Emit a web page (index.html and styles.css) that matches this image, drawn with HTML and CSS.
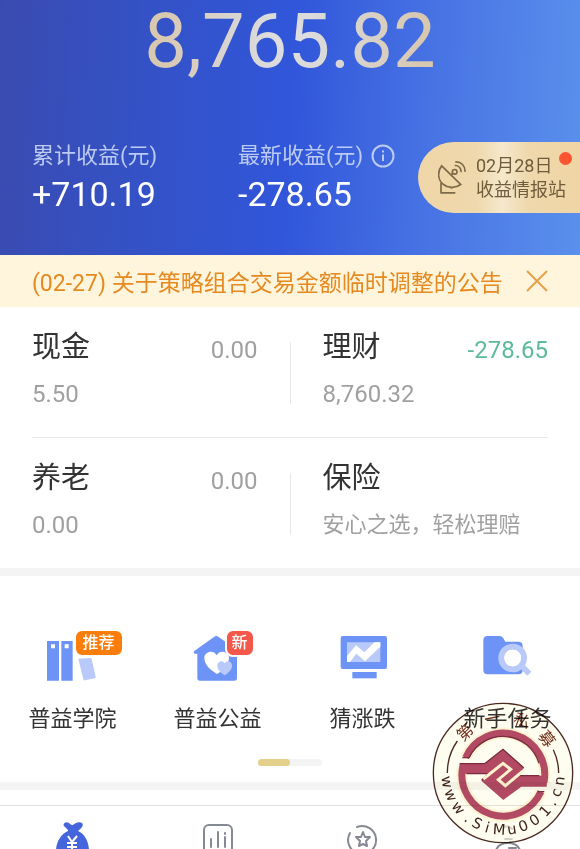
FILE: index.html
```
<!DOCTYPE html>
<html lang="zh-CN">
<head>
  <meta charset="UTF-8" />
  <meta name="viewport" content="width=device-width, initial-scale=1.0"/>
  <title>我的资产</title>
  <link rel="stylesheet" href="styles.css">
</head>
<body>

  <header>
    <h1 class="total">8,765.82</h1>
    <div class="stats">
      <div class="stat">
        <div class="stat-label">累计收益(元)</div>
        <div class="stat-value">+710.19</div>
      </div>
      <div class="stat">
        <div class="stat-label">
          最新收益(元)
          <button class="info" aria-label="说明">
            <svg viewBox="0 0 24 24" width="24" height="24">
              <circle cx="12" cy="12" r="10.5"/>
              <path d="M12 10.5v6.5M12 6.5v2"/>
            </svg>
          </button>
        </div>
        <div class="stat-value">-278.65</div>
      </div>
      <a class="report" href="#">
        <svg viewBox="115 92 84 104" width="28" height="35">
          <path d="M126 109C112 128 115 151 129 163C144 176 168 177 183 165ZM124 160V189M122 190H167M147 171L158 176"/>
          <circle cx="165" cy="127" r="7"/>
          <path d="M154 136L160 131M165 108C177 107 185 116 184 128M167 97C185 96 197 109 196 127"/>
        </svg>
        <span>02月28日<br>收益情报站</span>
        <i class="dot"></i>
      </a>
    </div>
  </header>

  <div class="notice">
    <a href="#">(02-27) 关于策略组合交易金额临时调整的公告</a>
    <button aria-label="关闭">
      <svg viewBox="0 0 22 22" width="22" height="22"><path d="M1 1L21 21M21 1L1 21"/></svg>
    </button>
  </div>

  <section class="assets">
    <div class="asset-row">
      <div class="asset">
        <div class="asset-head"><h2>现金</h2><span>0.00</span></div>
        <p>5.50</p>
      </div>
      <div class="divider"></div>
      <div class="asset">
        <div class="asset-head"><h2>理财</h2><span class="down">-278.65</span></div>
        <p>8,760.32</p>
      </div>
    </div>
    <div class="asset-row">
      <div class="asset">
        <div class="asset-head"><h2>养老</h2><span>0.00</span></div>
        <p>0.00</p>
      </div>
      <div class="divider"></div>
      <div class="asset">
        <div class="asset-head"><h2>保险</h2></div>
        <p class="slogan">安心之选，轻松理赔</p>
      </div>
    </div>
  </section>

  <section class="shortcuts">
    <div class="shortcut-list">
      <a href="#">
        <span class="icon">
          <svg viewBox="77 48 162 144" width="54" height="48">
            <path fill="#6c93f5" d="M80 63H116V182H80ZM123 63H157V182H123Z"/>
            <path fill="#fff" d="M92 73H104V85H92ZM133 73H145V85H133Z"/>
            <path fill="#b9cafa" d="M174 116L211 114Q213 114 214 117L226 170Q227 174 223 175L194 181Q190 182 189 178Z"/>
          </svg>
          <em class="badge">推荐</em>
        </span>
        普益学院
      </a>
      <a href="#">
        <span class="icon">
          <svg viewBox="514 48 162 144" width="54" height="48">
            <path fill="#6c93f5" d="M584 50Q590 46 596 50L652 90V174Q652 182 644 182H541Q533 182 533 174V101H526Q519 100 524 93Z"/>
            <path fill="#fff" d="M592 162C570 149 554 133 554 114C554 94 582 88 591 106C600 88 628 94 628 114C628 133 612 150 592 162Z"/>
            <path fill="#b9cafa" d="M615 166C602 157 593 149 593 137C593 122 610 119 615 130C621 119 637 122 637 137C637 149 628 157 615 166Z"/>
          </svg>
          <em class="badge new">新</em>
        </span>
        普益公益
      </a>
      <a href="#">
        <span class="icon">
          <svg viewBox="77 48 162 144" width="54" height="48">
            <rect x="91" y="48" width="139" height="99" rx="6" fill="#6c93f5"/>
            <path fill="#b9cafa" d="M110 67H210V126H110Z"/>
            <path fill="#fff" d="M110 108L137 76L162 97L192 67H210V80L164 124L138 101L119 126H110Z"/>
            <path fill="#6c93f5" d="M126 156H199V175H126Z"/>
          </svg>
        </span>
        猜涨跌
      </a>
      <a href="#">
        <span class="icon">
          <svg viewBox="514 48 162 144" width="54" height="48">
            <path fill="#6c93f5" d="M534 48H570Q577 48 581 55L587 65H626Q639 65 639 78V150Q639 163 626 163H534Q521 163 521 150V61Q521 48 534 48Z"/>
            <path stroke="#b9cafa" stroke-width="17" d="M640 142L659 161"/>
            <circle cx="609" cy="114" r="34" fill="#fff" stroke="#b9cafa" stroke-width="18"/>
            <circle cx="609" cy="114" r="25" fill="#fff"/>
          </svg>
        </span>
        新手任务
      </a>
    </div>
    <div class="pager"><span></span></div>
  </section>

  <nav>
    <a href="#" aria-label="资产">
      <svg viewBox="0 0 36 36" width="36" height="36">
        <path fill="#4465dc" d="M13 9L9 5C7 2 12 0 14 2C16 4 17 4 18 4C20 2 24 0 27 2C29 4 27 7 23 10C30 13 34 21 34 30Q34 36 28 36H8Q1 36 1 30C1 21 6 13 13 10Z"/>
        <path class="yen" d="M13 15L17 21L22 15M17 21V31M12 22H22M12 26H22"/>
      </svg>
    </a>
    <a href="#" aria-label="行情">
      <svg class="line" viewBox="0 0 36 36" width="36" height="36">
        <rect x="4" y="4" width="28" height="29" rx="5"/>
        <path d="M11 18V26M18 11V26M25 16V26M25 12V13"/>
      </svg>
    </a>
    <a href="#" aria-label="精选">
      <svg class="line" viewBox="0 0 36 36" width="36" height="36">
        <path d="M12 6A14 14 0 1 1 5 12"/>
        <path d="M18 11L20 16L25 16L21 20L22 25L18 23L14 25L15 20L11 16L16 16Z"/>
      </svg>
    </a>
    <a href="#" aria-label="我的">
      <svg class="line" viewBox="0 0 36 36" width="36" height="36">
        <path class="faint" d="M14 6Q18 4 22 8M15 18H22"/>
        <path d="M5 36Q5 22 18 22Q31 22 31 36M19 27H26"/>
      </svg>
    </a>
  </nav>

  <!-- site stamp over the lower right corner -->
  <svg class="stamp" viewBox="22 21 426 426" width="142" height="142">
    <circle cx="235" cy="234" r="209" fill="#fffdf0" stroke="#4d2a20" stroke-width="4"/>
    <path class="thin" d="M68 234A167 167 0 0 1 98 138M402 234A167 167 0 0 0 386 164"/>

    <g class="mark">
      <path class="glow" d="M123 188A124 124 0 0 1 358 262M114 216A124 124 0 0 0 349 290"/>
      <path class="ring" d="M123 188A124 124 0 0 1 358 262M114 216A124 124 0 0 0 349 290"/>
      <path class="solid" d="M104 205H180L235 162L298 218L282 242H368L366 275H290L236 315L170 257L190 236H106Z"/>
      <path class="shade" d="M106 206H180L235 163L297 218M126 236H190L171 256M344 242H284M113 188H133M339 290H359M133 188A113 113 0 0 1 343 205"/>
      <path class="cut" d="M176 252L235 205L258 223L221 254L242 272L296 227"/>
    </g>

    <g class="stamp-cn">
      <text transform="rotate(-43 235 234)" x="235" y="84">第</text>
      <text transform="rotate(-11 235 234)" x="235" y="84">一</text>
      <text transform="rotate(20 235 234)" x="235" y="84">私</text>
      <text transform="rotate(52 235 234)" x="235" y="84">募</text>
    </g>
    <g class="stamp-url">
      <text transform="rotate(81 235 234)" x="235" y="419">w</text>
      <text transform="rotate(67 235 234)" x="235" y="419">w</text>
      <text transform="rotate(52 235 234)" x="235" y="419">w</text>
      <text transform="rotate(38 235 234)" x="235" y="419">.</text>
      <text transform="rotate(27 235 234)" x="235" y="419">S</text>
      <text transform="rotate(16 235 234)" x="235" y="419">i</text>
      <text transform="rotate(4 235 234)" x="235" y="419">M</text>
      <text transform="rotate(-9 235 234)" x="235" y="419">u</text>
      <text transform="rotate(-21 235 234)" x="235" y="419">0</text>
      <text transform="rotate(-34 235 234)" x="235" y="419">0</text>
      <text transform="rotate(-48 235 234)" x="235" y="419">1</text>
      <text transform="rotate(-59 235 234)" x="235" y="419">.</text>
      <text transform="rotate(-70 235 234)" x="235" y="419">c</text>
      <text transform="rotate(-82 235 234)" x="235" y="419">n</text>
    </g>
  </svg>

</body>
</html>
```
FILE: styles.css
```
* {
  box-sizing: border-box;
}

body {
  margin: 0;
  position: relative;
  height: 100vh;
  overflow: hidden;
  font-family: Roboto, "Noto Sans CJK SC", sans-serif;
  font-size: 22px;
  background-color: white;
  color: #333;
}

a {
  color: inherit;
  text-decoration: none;
}

button {
  padding: 0;
  border: none;
  background: none;
  cursor: pointer;
}

svg {
  display: block;
  fill: none;
}

h1, h2, p {
  margin: 0;
  font-weight: 400;
}

header {
  padding-bottom: 39px;
  background: linear-gradient(93deg, #3a4bb0 0%, #3452c6 25%, #3156da 50%, #4671e3 72%, #5a90ec 100%);
}

.total {
  width: fit-content;
  margin: 0 auto;
  padding-bottom: 58px;
  font-size: 76px;
  line-height: 82px;
  color: transparent;
  background: radial-gradient(circle at 50% 40px, #dfe0e4 0%, #d8d4d0 35%, #d8c8b0 75%);
  background-clip: text;
  -webkit-background-clip: text;
}

.stats {
  display: grid;
  grid-template-columns: 206px 1fr 162px;
  align-items: start;
  padding-left: 32px;
}

.stat-label {
  display: flex;
  align-items: center;
  gap: 8px;
  line-height: 32px;
  white-space: nowrap;
  color: #bccbf3;
}

.info svg {
  stroke: #bccbf3;
  stroke-width: 2;
}

.stat-value {
  font-size: 34px;
  line-height: 44px;
  color: white;
}

.report {
  position: relative;
  display: flex;
  align-items: center;
  gap: 10px;
  height: 71px;
  margin-top: 2px;
  padding-left: 20px;
  border-radius: 36px 0 0 36px;
  background: linear-gradient(90deg, #efd6a8 0%, #efd8ac 36%, #f5e8cc 52%, #efd8ac 68%, #f0d5a4 100%);
  font-size: 18px;
  line-height: 24px;
  white-space: nowrap;
  color: #6e5c3c;
}

.report svg {
  stroke: #7d6a48;
  stroke-width: 5;
}

.dot {
  position: absolute;
  top: 10px;
  right: 8px;
  width: 13px;
  height: 13px;
  border-radius: 50%;
  background-color: #fb5430;
}

.notice {
  display: flex;
  align-items: center;
  justify-content: space-between;
  height: 52px;
  padding: 0 32px;
  background-color: #fef5dc;
  font-size: 23px;
  white-space: nowrap;
  color: #e6891f;
}

.notice svg {
  stroke: #e8a048;
  stroke-width: 2;
}

.assets {
  padding: 0 32px;
  border-bottom: 8px solid #f4f4f4;
}

.asset-row {
  display: grid;
  grid-template-columns: 1fr 1px 1fr;
  gap: 32px;
  padding: 20px 0 28px;
}

.asset-row + .asset-row {
  border-top: 1px solid #e8e8e8;
}

.divider {
  height: 62px;
  margin-top: 15px;
  background-color: #e8e8e8;
}

.asset-head {
  display: flex;
  justify-content: space-between;
  min-height: 43px;
}

.asset h2 {
  font-size: 29px;
  line-height: 40px;
}

.asset-head span {
  margin-top: 3px;
  line-height: 40px;
}

.asset-head span,
.asset p {
  font-size: 24px;
  color: #a0a0a0;
}

.asset p {
  margin-top: 9px;
  line-height: 30px;
}

.asset .slogan {
  font-size: 22px;
}

.asset-head .down {
  color: #5cba9a;
}

.shortcuts {
  padding: 60px 0 16px;
  border-bottom: 8px solid #f4f4f4;
}

.shortcut-list {
  display: grid;
  grid-template-columns: repeat(4, 1fr);
}

.shortcut-list a {
  display: flex;
  flex-direction: column;
  align-items: center;
  gap: 20px;
  line-height: 30px;
}

.icon {
  position: relative;
}

.badge {
  position: absolute;
  top: -7px;
  left: 28px;
  padding: 0 7px;
  border: 2px solid white;
  border-radius: 8px;
  background-color: #fb7d0c;
  font-size: 16px;
  font-style: normal;
  font-weight: 500;
  line-height: 24px;
  white-space: nowrap;
  color: white;
}

.badge.new {
  left: 34px;
  padding: 0 5px;
  background-color: #f3584a;
}

.pager {
  width: 64px;
  height: 7px;
  margin: 25px auto 0;
  border-radius: 4px;
  background-color: #f4f4f4;
}

.pager span {
  display: block;
  width: 50%;
  height: 100%;
  border-radius: 4px;
  background-color: #e2d08c;
}

nav {
  display: grid;
  grid-template-columns: repeat(4, 1fr);
  justify-items: center;
  margin-top: 15px;
  padding-top: 15px;
  border-top: 1px solid #e2e2e2;
}

nav .line {
  stroke: #858994;
  stroke-width: 2;
  stroke-linecap: round;
  stroke-linejoin: round;
}

nav .faint {
  stroke: #d2d2d2;
}

nav .yen {
  stroke: white;
  stroke-width: 2;
}

.stamp {
  position: absolute;
  right: 6px;
  bottom: 5px;
  mix-blend-mode: multiply;
}

.stamp .thin {
  stroke: #4d2a20;
  stroke-width: 4;
}

.mark .glow {
  stroke: #fdf3d2;
  stroke-width: 34;
}

.mark .ring {
  stroke: #b14a62;
  stroke-width: 21;
}

.mark .solid {
  fill: #b14a62;
}

.mark .shade {
  stroke: #7c2c3e;
  stroke-width: 4;
}

.mark .cut {
  stroke: #fff3cf;
  stroke-width: 9;
}

.stamp text {
  text-anchor: middle;
}

.stamp-cn {
  font-size: 48px;
  fill: #70301c;
}

.stamp-url {
  font-family: "DejaVu Sans", sans-serif;
  font-size: 44px;
  fill: #3f2418;
}
```
